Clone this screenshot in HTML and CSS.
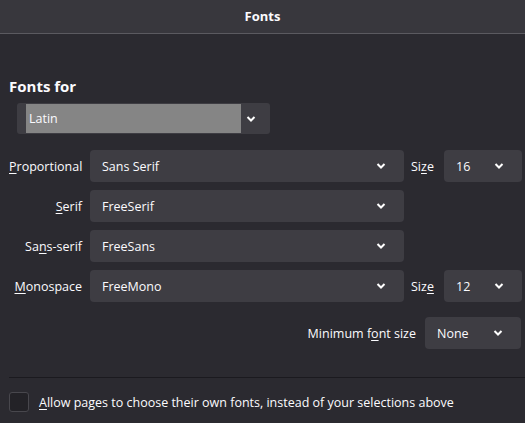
FILE: index.html
```html
<!DOCTYPE html>
<html lang="en">
<head>
    <meta charset="UTF-8">
    <title>Fonts</title>
    <link rel="stylesheet" href="styles.css">
</head>
<body>

<div class="entete">Fonts</div>

<div class="contenu">
    <h2 class="titre">Fonts for</h2>

    <div class="choix-langue">
        <span class="surligne">Latin</span>
        <svg class="chevron" width="10" height="6" viewBox="0 0 10 6"><polyline points="1.5,1 5,4.5 8.5,1" fill="none" stroke="#fff" stroke-width="2"/></svg>
    </div>

    <div class="grille">
        <label class="etiquette"><u>P</u>roportional</label>
        <div class="liste"><span>Sans Serif</span><svg class="chevron" width="10" height="6" viewBox="0 0 10 6"><polyline points="1.5,1 5,4.5 8.5,1" fill="none" stroke="#fff" stroke-width="2"/></svg></div>
        <label class="etiquette-taille">Si<u>z</u>e</label>
        <div class="liste"><span>16</span><svg class="chevron" width="10" height="6" viewBox="0 0 10 6"><polyline points="1.5,1 5,4.5 8.5,1" fill="none" stroke="#fff" stroke-width="2"/></svg></div>

        <label class="etiquette"><u>S</u>erif</label>
        <div class="liste"><span>FreeSerif</span><svg class="chevron" width="10" height="6" viewBox="0 0 10 6"><polyline points="1.5,1 5,4.5 8.5,1" fill="none" stroke="#fff" stroke-width="2"/></svg></div>
        <span></span><span></span>

        <label class="etiquette">Sa<u>n</u>s-serif</label>
        <div class="liste"><span>FreeSans</span><svg class="chevron" width="10" height="6" viewBox="0 0 10 6"><polyline points="1.5,1 5,4.5 8.5,1" fill="none" stroke="#fff" stroke-width="2"/></svg></div>
        <span></span><span></span>

        <label class="etiquette"><u>M</u>onospace</label>
        <div class="liste"><span>FreeMono</span><svg class="chevron" width="10" height="6" viewBox="0 0 10 6"><polyline points="1.5,1 5,4.5 8.5,1" fill="none" stroke="#fff" stroke-width="2"/></svg></div>
        <label class="etiquette-taille">Siz<u>e</u></label>
        <div class="liste"><span>12</span><svg class="chevron" width="10" height="6" viewBox="0 0 10 6"><polyline points="1.5,1 5,4.5 8.5,1" fill="none" stroke="#fff" stroke-width="2"/></svg></div>
    </div>

    <div class="minimum">
        <label>Minimum f<u>o</u>nt size</label>
        <div class="liste liste-min"><span>None</span><svg class="chevron" width="10" height="6" viewBox="0 0 10 6"><polyline points="1.5,1 5,4.5 8.5,1" fill="none" stroke="#fff" stroke-width="2"/></svg></div>
    </div>
</div>

<div class="pied">
    <span class="case"></span>
    <label><u>A</u>llow pages to choose their own fonts, instead of your selections above</label>
</div>

</body>
</html>
```

FILE: styles.css
```css
:root {
    --fond: #2b2a30;
    --fond-entete: #38373d;
    --fond-liste: #3e3d43;
    --texte: #fbfbfe;
}

body {
    margin: 0;
    background: var(--fond);
    color: var(--texte);
    font-family: "Open Sans", "Noto Sans", sans-serif;
    font-size: 12.5px;
    height: 423px;
    overflow: hidden;
}

u {
    text-decoration-thickness: 1px;
    text-underline-offset: 2px;
}

.entete {
    height: 33px;
    line-height: 33px;
    background: var(--fond-entete);
    border-bottom: 1px solid #5b5a60;
    text-align: center;
    font-weight: bold;
    font-size: 13px;
}

.contenu {
    padding: 0 4px 0 9px;
}

.titre {
    margin: 0;
    padding-top: 42px;
    font-size: 15px;
    line-height: 20px;
    font-weight: bold;
}

.choix-langue {
    display: flex;
    align-items: center;
    margin: 7px 0 0 8px;
    width: 253px;
    height: 31px;
    background: var(--fond-liste);
    border-radius: 3px;
    box-sizing: border-box;
    padding: 1px 0 1px 9px;
}

.surligne {
    align-self: stretch;
    width: 212px;
    background: #858585;
    padding-left: 3px;
    line-height: 29px;
}

.choix-langue .chevron {
    margin-left: 5px;
}

.grille {
    display: grid;
    grid-template-columns: 73px 314px 24px 78px;
    column-gap: 8px;
    row-gap: 8px;
    margin-top: 16px;
    align-items: center;
}

.etiquette {
    text-align: right;
}

.etiquette-taille {
    margin-left: -1px;
}

.liste {
    display: flex;
    align-items: center;
    justify-content: space-between;
    height: 32px;
    background: var(--fond-liste);
    border-radius: 4px;
    padding: 0 18px 0 12px;
}

.minimum {
    display: flex;
    justify-content: flex-end;
    align-items: center;
    gap: 9px;
    margin-top: 15px;
}

.liste-min {
    width: 96px;
    box-sizing: border-box;
    padding-right: 18px;
}

.pied {
    display: flex;
    align-items: center;
    gap: 10px;
    margin: 28px 0 0 9px;
    padding-top: 14px;
    border-top: 1px solid #1b1a1f;
}

.case {
    width: 18px;
    height: 18px;
    border: 1px solid #48474d;
    border-radius: 3px;
    background: #232227;
}
```
